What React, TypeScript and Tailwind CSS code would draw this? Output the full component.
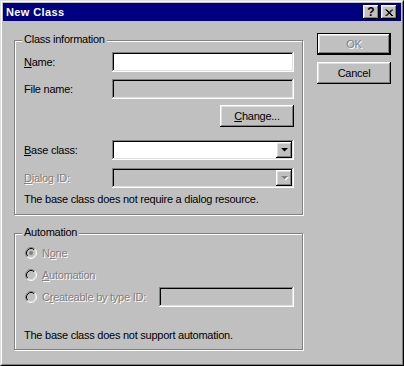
import React from "react";

const raised =
  "[box-shadow:inset_-1px_-1px_#000,inset_1px_1px_#fff,inset_-2px_-2px_#808080,inset_2px_2px_#dfdfdf]";
const sunken =
  "[box-shadow:inset_-1px_-1px_#fff,inset_1px_1px_#808080,inset_-2px_-2px_#dfdfdf,inset_2px_2px_#000]";
const disabledText = "text-[#808080] [text-shadow:1px_1px_0_#fff]";

function U({ children }: { children: React.ReactNode }) {
  return <span className="underline underline-offset-[1px] decoration-[1px]">{children}</span>;
}

function Group({
  label,
  className = "",
  children,
}: {
  label: string;
  className?: string;
  children: React.ReactNode;
}) {
  return (
    <div
      className={`relative w-[289px] border border-[#808080] [box-shadow:1px_1px_0_#fff,inset_1px_1px_0_#fff] ${className}`}
    >
      <span className="absolute -top-[8px] left-[7px] bg-[#c0c0c0] px-[2px] leading-[13px]">
        {label}
      </span>
      {children}
    </div>
  );
}

function Field({ disabled = false, className = "" }: { disabled?: boolean; className?: string }) {
  return <div className={`h-[20px] ${disabled ? "bg-[#c0c0c0]" : "bg-white"} ${sunken} ${className}`} />;
}

function Combo({ disabled = false }: { disabled?: boolean }) {
  return (
    <div
      className={`flex h-[20px] w-[182px] justify-end p-[2px] ${disabled ? "bg-[#c0c0c0]" : "bg-white"} ${sunken}`}
    >
      <div className={`flex h-[16px] w-[16px] items-center justify-center bg-[#c0c0c0] ${raised}`}>
        <svg width="9" height="6" viewBox="0 0 9 6">
          {disabled && <path d="M2 2h7L5.5 5.5z" fill="#fff" />}
          <path d="M1 1h7L4.5 4.5z" fill={disabled ? "#808080" : "#000"} />
        </svg>
      </div>
    </div>
  );
}

function Button({
  children,
  disabled = false,
  isDefault = false,
  className = "",
}: {
  children: React.ReactNode;
  disabled?: boolean;
  isDefault?: boolean;
  className?: string;
}) {
  return (
    <div
      className={`flex h-[22px] w-[74px] items-center justify-center bg-[#c0c0c0] ${
        isDefault
          ? "border border-black [box-shadow:inset_-1px_-1px_#000,inset_1px_1px_#fff,inset_-2px_-2px_#808080,inset_2px_2px_#dfdfdf]"
          : raised
      } ${disabled ? disabledText : ""} ${className}`}
    >
      {children}
    </div>
  );
}

function Radio({ checked = false }: { checked?: boolean }) {
  return (
    <svg width="12" height="12" viewBox="0 0 12 12" className="ml-[1px] shrink-0">
      <circle cx="6" cy="6" r="4.5" fill="#c0c0c0" />
      <path d="M9.89 2.11 A5.5 5.5 0 0 0 2.11 9.89" stroke="#808080" fill="none" />
      <path d="M2.11 9.89 A5.5 5.5 0 0 0 9.89 2.11" stroke="#fff" fill="none" />
      <path d="M9.18 2.82 A4.5 4.5 0 0 0 2.82 9.18" stroke="#000" fill="none" />
      <path d="M2.82 9.18 A4.5 4.5 0 0 0 9.18 2.82" stroke="#dfdfdf" fill="none" />
      {checked && <circle cx="6" cy="6" r="2" fill="#808080" />}
    </svg>
  );
}

export default function App() {
  return (
    <div className="h-[366px] w-[404px] bg-[#c0c0c0] font-['Liberation_Sans',Arial,sans-serif] text-[11px] leading-[13px] tracking-[-0.25px] text-black">
      <div className="h-full w-full border border-t-[#dfdfdf] border-l-[#dfdfdf] border-r-black border-b-black">
        <div className="h-full w-full border border-t-white border-l-white border-r-[#808080] border-b-[#808080] p-[1px]">
          {/* Title bar */}
          <div className="flex h-[18px] items-center bg-[#000080] pl-[3px] pr-[4px]">
            <span className="flex-1 font-bold tracking-[0.4px] text-white">New Class</span>
            <div className={`flex h-[14px] w-[16px] items-center justify-center bg-[#c0c0c0] ${raised}`}>
              <span className="mt-[1px] text-[12px] font-bold leading-[11px] tracking-normal">?</span>
            </div>
            <div className={`ml-[2px] flex h-[14px] w-[16px] items-center justify-center bg-[#c0c0c0] ${raised}`}>
              <svg width="8" height="7" viewBox="0 0 8 7">
                <path d="M0.5 0.5 L7 7 M1.5 0.5 L8 7 M7 0.5 L0.5 7 M8 0.5 L1.5 7" stroke="#000" strokeWidth="1" />
              </svg>
            </div>
          </div>

          {/* Body */}
          <div className="flex pl-[11px]">
            <div className="flex flex-col pt-[19px]">
              <Group label="Class information" className="pb-[8px] pl-[9px] pr-[8px] pt-[11px]">
                <div className="flex h-[20px] items-center">
                  <span className="w-[88px]">
                    <U>N</U>ame:
                  </span>
                  <Field className="w-[182px]" />
                </div>
                <div className="mt-[7px] flex h-[20px] items-center">
                  <span className="w-[88px]">File name:</span>
                  <Field disabled className="w-[182px]" />
                </div>
                <div className="mt-[6px] flex justify-end">
                  <Button>
                    <span>
                      <U>C</U>hange...
                    </span>
                  </Button>
                </div>
                <div className="mt-[13px] flex h-[20px] items-center">
                  <span className="w-[88px]">
                    <U>B</U>ase class:
                  </span>
                  <Combo />
                </div>
                <div className="mt-[8px] flex h-[20px] items-center">
                  <span className={`w-[88px] ${disabledText}`}>
                    <U>D</U>ialog ID:
                  </span>
                  <Combo disabled />
                </div>
                <div className="mt-[5px]">The base class does not require a dialog resource.</div>
              </Group>

              <Group label="Automation" className="mt-[18px] pb-[7px] pl-[9px] pr-[8px] pt-[8px]">
                <div className="flex h-[22px] items-center">
                  <Radio checked />
                  <span className={`ml-[5px] ${disabledText}`}>
                    N<U>o</U>ne
                  </span>
                </div>
                <div className="flex h-[22px] items-center">
                  <Radio />
                  <span className={`ml-[5px] ${disabledText}`}>
                    <U>A</U>utomation
                  </span>
                </div>
                <div className="flex h-[22px] items-center">
                  <Radio />
                  <span className={`ml-[5px] flex-1 ${disabledText}`}>
                    C<U>r</U>eateable by type ID:
                  </span>
                  <Field disabled className="w-[135px]" />
                </div>
                <div className="mt-[21px]">The base class does not support automation.</div>
              </Group>
            </div>

            <div className="ml-[14px] flex flex-col pt-[12px]">
              <Button disabled isDefault>
                OK
              </Button>
              <Button className="mt-[7px]">Cancel</Button>
            </div>
          </div>
        </div>
      </div>
    </div>
  );
}
